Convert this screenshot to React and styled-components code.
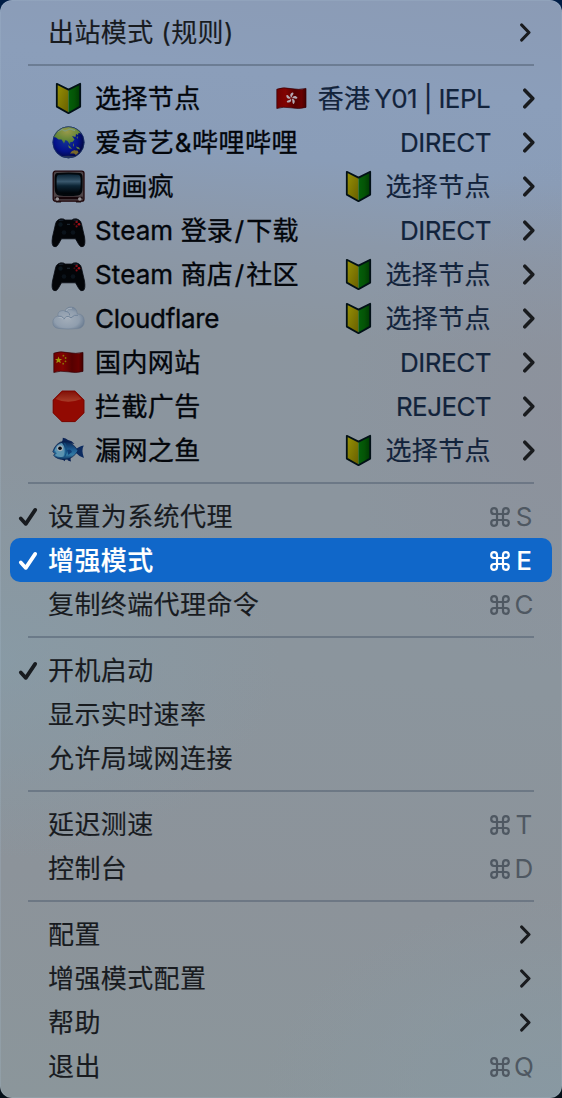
import React from "react";
import styled, { createGlobalStyle, css } from "styled-components";

const GlobalStyle = createGlobalStyle`
  html, body { margin: 0; padding: 0; }
  body {
    width: 562px;
    height: 1098px;
    overflow: hidden;
    background: linear-gradient(#001d45 0%, #001d45 40%, #050f18 100%);
    -webkit-font-smoothing: antialiased;
  }
`;

const Menu = styled.div`
  box-sizing: border-box;
  width: 562px;
  height: 1098px;
  padding: 10px;
  display: flex;
  flex-direction: column;
  border-radius: 12px;
  overflow: hidden;
  font-family: Inter, "Noto Sans CJK SC", sans-serif;
  font-size: 26px;
  color: #181b1f;
  box-shadow: inset 0 0 0 1px rgba(170, 190, 210, 0.22);
  background:
    radial-gradient(ellipse 280px 200px at 0% 60%, rgba(135, 156, 168, 0.7), rgba(135, 156, 168, 0)),
    radial-gradient(ellipse 300px 200px at 100% 100%, rgba(136, 153, 163, 0.9), rgba(136, 153, 163, 0)),
    radial-gradient(ellipse 220px 260px at 100% 38%, rgba(141, 144, 155, 0.7), rgba(141, 144, 155, 0)),
    linear-gradient(186deg, #8b9bb5 0%, #8b9eba 9%, #8a9db8 16%, #8b98a9 23%, #8b959f 31%, #8b959d 60%, #8c939a 80%, #8b969b 100%);
`;

const Separator = styled.div`
  height: 2px;
  flex: none;
  margin: 10px 18px;
  background: rgba(78, 92, 110, 0.5);
`;

const Row = styled.div`
  box-sizing: border-box;
  height: 44px;
  flex: none;
  display: flex;
  align-items: center;
  padding: 0 ${(p) => (p.$proxy ? 17 : 18)}px 0 ${(p) => (p.$proxy ? 40 : 8)}px;
  border-radius: 10px;
  ${(p) =>
    p.$proxy &&
    css`
      color: #03060b;
    `}
  ${(p) =>
    p.$active &&
    css`
      background: #1067c9;
      color: #fff;
      font-weight: 500;
    `}
`;

const CheckSlot = styled.span`
  width: 30px;
  height: 44px;
  padding-top: 2px;
  flex: none;
  display: flex;
  align-items: center;
`;

const Label = styled.span`
  white-space: pre;
  line-height: 44px;
  padding-top: 2px;
  letter-spacing: ${(p) => p.$track ?? 0.4}px;
  margin-left: ${(p) => (p.$proxy ? 9 : 0)}px;
  -webkit-text-stroke: ${(p) => (p.$proxy ? 0.35 : 0.15)}px currentColor;
`;

const Slash = styled.span`
  margin: 0 2px;
`;

const Value = styled.span`
  margin-left: auto;
  display: flex;
  align-items: center;
  gap: 9px;
  color: #12233b;
  white-space: pre;
`;

const ValueText = styled.span`
  line-height: 44px;
  padding-top: 2px;
  letter-spacing: ${(p) => p.$track ?? 0.4}px;
  -webkit-text-stroke: 0.2px currentColor;
`;

const Latin = styled.span`
  margin-left: -3px;
  margin-right: 1px;
  letter-spacing: -0.6px;
`;

const Shortcut = styled.span`
  margin-left: auto;
  margin-right: -2px;
  padding-top: 2px;
  display: flex;
  align-items: center;
  color: ${(p) => (p.$active ? "#fff" : "#4f5862")};
`;

const Key = styled.span`
  width: 24px;
  margin-left: 2px;
  text-align: center;
  line-height: 44px;
`;

const ChevronSvg = styled.svg`
  flex: none;
  margin-left: ${(p) => (p.$proxy ? "32px" : "auto")};
  margin-right: ${(p) => (p.$proxy ? 0 : 3)}px;
`;

const Emoji = styled.svg`
  width: 36px;
  height: 36px;
  flex: none;
`;

const Chevron = ({ proxy }) => (
  <ChevronSvg $proxy={proxy} width={proxy ? 12 : 11} height={proxy ? 21 : 19} viewBox="0 0 12 21">
    <path d="M1.8 2.2 L9.8 10.5 L1.8 18.8" fill="none" stroke="#191b1e" strokeWidth="3.5" strokeLinecap="round" strokeLinejoin="round" />
  </ChevronSvg>
);

const Check = () => (
  <svg width="20" height="20" viewBox="0 0 20 20">
    <path d="M2.8 11.4 L7.8 16.9 L17.2 2.9" fill="none" stroke="currentColor" strokeWidth="3.7" strokeLinecap="round" strokeLinejoin="round" />
  </svg>
);

const Command = () => (
  <svg width="20" height="20" viewBox="0 0 20 20">
    <path
      d="M7 7 H13 V13 H7 Z M7 7 V4 A2.9 2.9 0 1 0 4 7 H7 M13 7 H16 A2.9 2.9 0 1 0 13 4 V7 M13 13 V16 A2.9 2.9 0 1 0 16 13 H13 M7 13 H4 A2.9 2.9 0 1 0 7 16 V13"
      fill="none"
      stroke="currentColor"
      strokeWidth="2.2"
    />
  </svg>
);

const Defs = () => (
  <svg width="0" height="0" style={{ position: "absolute" }}>
    <defs>
      <linearGradient id="leafL" x1="0" y1="0" x2="1" y2="1">
        <stop offset="0" stopColor="#989205" />
        <stop offset="1" stopColor="#675e00" />
      </linearGradient>
      <linearGradient id="leafR" x1="0" y1="0" x2="1" y2="0">
        <stop offset="0" stopColor="#04600a" />
        <stop offset=".5" stopColor="#045406" />
        <stop offset="1" stopColor="#003a02" />
      </linearGradient>
      <radialGradient id="sea" cx=".42" cy=".42" r=".6">
        <stop offset="0" stopColor="#143694" />
        <stop offset=".6" stopColor="#04128c" />
        <stop offset="1" stopColor="#02073c" />
      </radialGradient>
      <radialGradient id="land" cx=".5" cy=".3" r=".7">
        <stop offset="0" stopColor="#99994a" />
        <stop offset=".7" stopColor="#5e8436" />
        <stop offset="1" stopColor="#386a48" />
      </radialGradient>
      <linearGradient id="screen" x1="0" y1="0" x2="0" y2="1">
        <stop offset="0" stopColor="#0a2233" />
        <stop offset=".38" stopColor="#3a586d" />
        <stop offset=".6" stopColor="#0c2434" />
        <stop offset="1" stopColor="#000408" />
      </linearGradient>
      <radialGradient id="cloud" cx=".45" cy=".55" r=".6">
        <stop offset="0" stopColor="#a2adb9" />
        <stop offset=".65" stopColor="#909eae" />
        <stop offset="1" stopColor="#697b90" />
      </radialGradient>
      <linearGradient id="flag" x1="0" y1="0" x2="1" y2="0">
        <stop offset="0" stopColor="#700000" />
        <stop offset=".3" stopColor="#820302" />
        <stop offset=".62" stopColor="#560000" />
        <stop offset=".85" stopColor="#680000" />
        <stop offset="1" stopColor="#440000" />
      </linearGradient>
      <linearGradient id="stop" x1="0" y1="0" x2="0" y2="1">
        <stop offset="0" stopColor="#84140a" />
        <stop offset="1" stopColor="#a83c28" />
      </linearGradient>
      <linearGradient id="fish" x1="0" y1="0" x2="0" y2="1">
        <stop offset="0" stopColor="#08204c" />
        <stop offset=".45" stopColor="#1c5a90" />
        <stop offset=".75" stopColor="#327aa4" />
        <stop offset="1" stopColor="#0a2d5c" />
      </linearGradient>
      <clipPath id="globeClip"><circle cx="18.5" cy="18.3" r="15.9" /></clipPath>
    </defs>
  </svg>
);

const Leaf = () => (
  <Emoji viewBox="0 0 36 36">
    <path d="M6.8 3.6 L18.5 10 V33.4 L6.8 26.6 Z" fill="url(#leafL)" />
    <path d="M30.2 3.6 L18.5 10 V33.4 L30.2 26.6 Z" fill="url(#leafR)" />
    <path d="M6.8 3.8 L18.5 9.6 L30.2 3.8 V26.6 L18.5 33.2 L6.8 26.6 Z" fill="none" stroke="#021017" strokeWidth="1.8" strokeLinejoin="round" />
  </Emoji>
);

const Globe = () => (
  <Emoji viewBox="0 0 36 36">
    <circle cx="18.5" cy="18.3" r="15.9" fill="url(#sea)" />
    <g clipPath="url(#globeClip)">
      <path d="M3 13 L5 8 L11 3 L20 2 L29 6 L31 9.5 L28.5 9 L28 11 L26 10 L25.5 13 L22 12 L24.5 15.5 L22.5 18 L20.5 18 L19.8 20.5 L17.5 17 L15.5 16 L14 19.5 L11.5 15.5 L8.5 15.5 L6 13.5 Z" fill="url(#land)" />
      <path d="M18 21 L20 22.5 L22 25 L19 24 Z M23 19 L24 21 L23 23 Z M26 22.5 L29 23.5 L30 25.5 L27 24.5 Z M26.5 13.5 L28 12 L27.4 15 Z" fill="#60803f" />
      <path d="M20 29.5 L22 27 L25 26 L26 27 L27 26 L28.6 28.6 L26 31 L24 29.6 Z" fill="#786829" />
      <path d="M8 7.5 L12 5.5 L15 7 L20 5 L25 6.6" fill="none" stroke="#7f9a78" strokeWidth="1.2" />
      <path d="M9 33 Q18 30.5 28 33 L27 36 H9 Z" fill="#36455c" opacity=".7" />
    </g>
    <circle cx="18.5" cy="18.3" r="15.6" fill="none" stroke="#1a366c" strokeWidth=".9" opacity=".8" />
  </Emoji>
);

const Television = () => (
  <Emoji viewBox="0 0 36 36">
    <path d="M4.5 30 H12 L11 34.4 H6 Z M25 30 H32.5 L31 34.4 H26 Z" fill="#1a1416" />
    <rect x="3.2" y="3.2" width="30.8" height="30" rx="2.2" fill="#4e4548" stroke="#1e0508" strokeWidth="1.3" />
    <path d="M4.6 30 H32.6" stroke="#17060a" strokeWidth="2.4" />
    <path d="M7 5 Q18.5 3.8 30 5 Q32.6 5.3 32.6 10 V19 Q32.6 27 28 27.6 Q18.5 28.6 9 27.6 Q4.6 27 4.6 19 V10 Q4.6 5.3 7 5Z" fill="#02070b" />
    <path d="M9 6.8 Q18.5 5.8 28 6.8 Q30.6 7 30.6 11 V17 Q30.6 24.8 25.5 25.2 Q18.5 25.8 11.5 25.2 Q6.6 24.8 6.6 17 V11 Q6.6 7 9 6.8Z" fill="url(#screen)" />
    <circle cx="7.3" cy="31" r="1.8" fill="#928f93" />
    <circle cx="29.8" cy="31" r="1.8" fill="#928f93" />
  </Emoji>
);

const Gamepad = () => (
  <Emoji viewBox="0 0 36 36">
    <path d="M8 8 Q10 6.3 13.5 7 L15 8 H22 L23.5 7 Q27 6.3 29 8 Q31 9 31.5 12 L34.5 25 Q35.7 33 33.3 34.5 Q30.5 36 28.5 32 L25.5 26.8 H11.5 L8.5 32 Q6.5 36 3.7 34.5 Q1.2 33 2.5 25 L5.5 12 Q6 9 8 8Z" fill="#030508" stroke="#0a0e15" strokeWidth=".8" />
    <path d="M9 8.3 L13.5 8 M23.5 8 L28 8.3" stroke="#1a2431" strokeWidth="1.2" />
    <circle cx="10.5" cy="12.5" r="2.2" fill="#0a151d" />
    <circle cx="14" cy="20.5" r="2.3" fill="#0a121a" />
    <circle cx="23" cy="20.5" r="2.3" fill="#0a121a" />
    <circle cx="26.6" cy="9.9" r="1.2" fill="#8c0e16" />
    <circle cx="24.4" cy="12.2" r="1" fill="#4a070c" />
    <circle cx="29" cy="12.2" r="1.3" fill="#a30f18" />
    <circle cx="26.6" cy="14.4" r="1.1" fill="#7c0c14" />
    <path d="M17 12.3 H20" stroke="#1c2731" strokeWidth="1.2" />
  </Emoji>
);

const Cloud = () => (
  <Emoji viewBox="0 0 36 36">
    <path d="M9 28.5 Q2.8 28 2.8 22.3 Q2.8 17.5 8 16 Q7.4 11.3 12 10.6 Q14 10.2 15 11.2 Q16.5 6.9 21 7 Q26.8 7.2 27.3 14 Q34 13.7 34.3 21 Q34.4 28 27.5 28.6 Q18 29.6 9 28.5Z" fill="url(#cloud)" stroke="#6a7d93" strokeWidth=".5" />
    <path d="M8 16.2 Q12 15.5 13.8 18.3 M15 11.3 Q19.5 11.5 19.7 15.4 M14 19.2 Q16.5 14.5 21 17.8 Q24.5 14.2 28 15.3" fill="none" stroke="#71849a" strokeWidth="1" />
    <path d="M8.5 17.4 Q11.5 16.8 13 19 M16 10.5 Q18 7.6 22 8.2 M15.5 18.2 Q18 16 20.5 19" fill="none" stroke="#aeb8c3" strokeWidth=".8" />
  </Emoji>
);

const flagShape = "M3.8 9.2 Q10 6.8 18 8.6 Q26 10.2 33 8.4 V27.4 Q26 29.4 18 27.8 Q10 26.3 3.8 28.5Z";

const ChinaFlag = () => (
  <Emoji viewBox="0 0 36 36">
    <path d={flagShape} fill="url(#flag)" stroke="#350207" strokeWidth=".7" />
    <path d="M8.5 12.4 L9.5 14.9 L12.1 15 L10.1 16.6 L10.8 19.2 L8.5 17.8 L6.3 19.2 L6.9 16.6 L5 15 L7.6 14.9Z" fill="#a0930b" />
    <circle cx="13.4" cy="11.7" r=".9" fill="#8a7705" />
    <circle cx="15.6" cy="14" r=".9" fill="#8a7705" />
    <circle cx="15.5" cy="17.3" r=".9" fill="#8a7705" />
    <circle cx="13.2" cy="19.7" r=".9" fill="#8a7705" />
  </Emoji>
);

const HongKongFlag = () => (
  <Emoji viewBox="0 0 36 36">
    <path d={flagShape} fill="url(#flag)" stroke="#350207" strokeWidth=".7" />
    <g transform="translate(18.5 18.3) rotate(8)" fill="#b3a9b2">
      {[0, 72, 144, 216, 288].map((a) => (
        <path key={a} transform={`rotate(${a})`} d="M0 -.6 C-2.4 -2 -2.3 -5 .6 -6 C2.3 -4.8 .3 -3.8 0 -.6Z" />
      ))}
    </g>
  </Emoji>
);

const StopSign = () => (
  <Emoji viewBox="0 0 36 36">
    <path d="M12 2.8 H25 L34.3 12 V25 L25 34 H12 L2.8 25 V12Z" fill="#920a02" />
    <path d="M12.5 3.9 H24.6 L31.5 11 Q18 16.5 5.6 11Z" fill="url(#stop)" />
    <path d="M12 3.2 H25 L33.8 12 V25 L25 33.6 H12 L3.3 25 V12Z" fill="none" stroke="#760a05" strokeWidth=".9" />
  </Emoji>
);

const Fish = () => (
  <Emoji viewBox="0 0 36 36">
    <path d="M12 10 Q13 7 12.8 5.8 Q16 6 18 8 Q22 8.6 24.5 12Z M17 26 Q17 29 21 29.5 Q20 27 21 25Z M10 26 L15 29.2 L15 26Z" fill="#0b2354" />
    <path d="M25 18 Q29 14 33.8 13.4 Q31 18 34 26 Q29 24.5 25 20Z" fill="#0c2b60" />
    <path d="M2.8 19.8 Q6 10 14 9.2 Q22 9 28 18.8 Q23 26.8 15 27.5 Q7 27.7 3.5 23.2 L5.3 21.7Z" fill="url(#fish)" stroke="#08204c" strokeWidth=".7" />
    <path d="M4.5 18.2 Q6.5 12 12 11 Q16.5 16 13.5 24.5 Q8 26 5 23 L7 21.4Z" fill="#5c93b0" />
    <path d="M14.5 11 Q18.5 17 14.7 25" fill="none" stroke="#155080" strokeWidth="1.1" />
    <circle cx="10" cy="16.3" r="3" fill="#a2adb8" />
    <circle cx="10" cy="16.3" r="1.8" fill="#02060d" />
    <path d="M17 18 Q21 16.5 22 20 Q20 21 18.5 23Z" fill="#103c74" />
  </Emoji>
);

const Item = ({ text, checked, active, keyName, submenu }) => (
  <Row $active={active}>
    <CheckSlot>{checked && <Check />}</CheckSlot>
    <Label>{text}</Label>
    {keyName && (
      <Shortcut $active={active}>
        <Command />
        <Key>{keyName}</Key>
      </Shortcut>
    )}
    {submenu && <Chevron />}
  </Row>
);

const ProxyItem = ({ icon: Icon, text, track, value = "选择节点", valueIcon: ValueIcon, valueTrack }) => (
  <Row $proxy>
    <Icon />
    <Label $proxy $track={track}>{text}</Label>
    <Value>
      {ValueIcon && <ValueIcon />}
      <ValueText $track={valueTrack}>{value}</ValueText>
    </Value>
    <Chevron proxy />
  </Row>
);

export default function App() {
  return (
    <>
      <GlobalStyle />
      <Defs />
      <Menu>
        <Item text="出站模式 (规则)" submenu />
        <Separator />
        <ProxyItem icon={Leaf} text="选择节点" valueIcon={HongKongFlag} value={<>香港<Latin> Y01 | IEPL</Latin></>} />
        <ProxyItem icon={Globe} text="爱奇艺&哔哩哔哩" track={0.55} value="DIRECT" valueTrack={-0.5} />
        <ProxyItem icon={Television} text="动画疯" valueIcon={Leaf} />
        <ProxyItem icon={Gamepad} text={<>Steam 登录<Slash>/</Slash>下载</>} track={0.1} value="DIRECT" valueTrack={-0.5} />
        <ProxyItem icon={Gamepad} text={<>Steam 商店<Slash>/</Slash>社区</>} track={0.1} valueIcon={Leaf} />
        <ProxyItem icon={Cloud} text="Cloudflare" track={-0.3} valueIcon={Leaf} />
        <ProxyItem icon={ChinaFlag} text="国内网站" value="DIRECT" valueTrack={-0.5} />
        <ProxyItem icon={StopSign} text="拦截广告" value="REJECT" valueTrack={-0.6} />
        <ProxyItem icon={Fish} text="漏网之鱼" valueIcon={Leaf} />
        <Separator />
        <Item text="设置为系统代理" checked keyName="S" />
        <Item text="增强模式" checked active keyName="E" />
        <Item text="复制终端代理命令" keyName="C" />
        <Separator />
        <Item text="开机启动" checked />
        <Item text="显示实时速率" />
        <Item text="允许局域网连接" />
        <Separator />
        <Item text="延迟测速" keyName="T" />
        <Item text="控制台" keyName="D" />
        <Separator />
        <Item text="配置" submenu />
        <Item text="增强模式配置" submenu />
        <Item text="帮助" submenu />
        <Item text="退出" keyName="Q" />
      </Menu>
    </>
  );
}
